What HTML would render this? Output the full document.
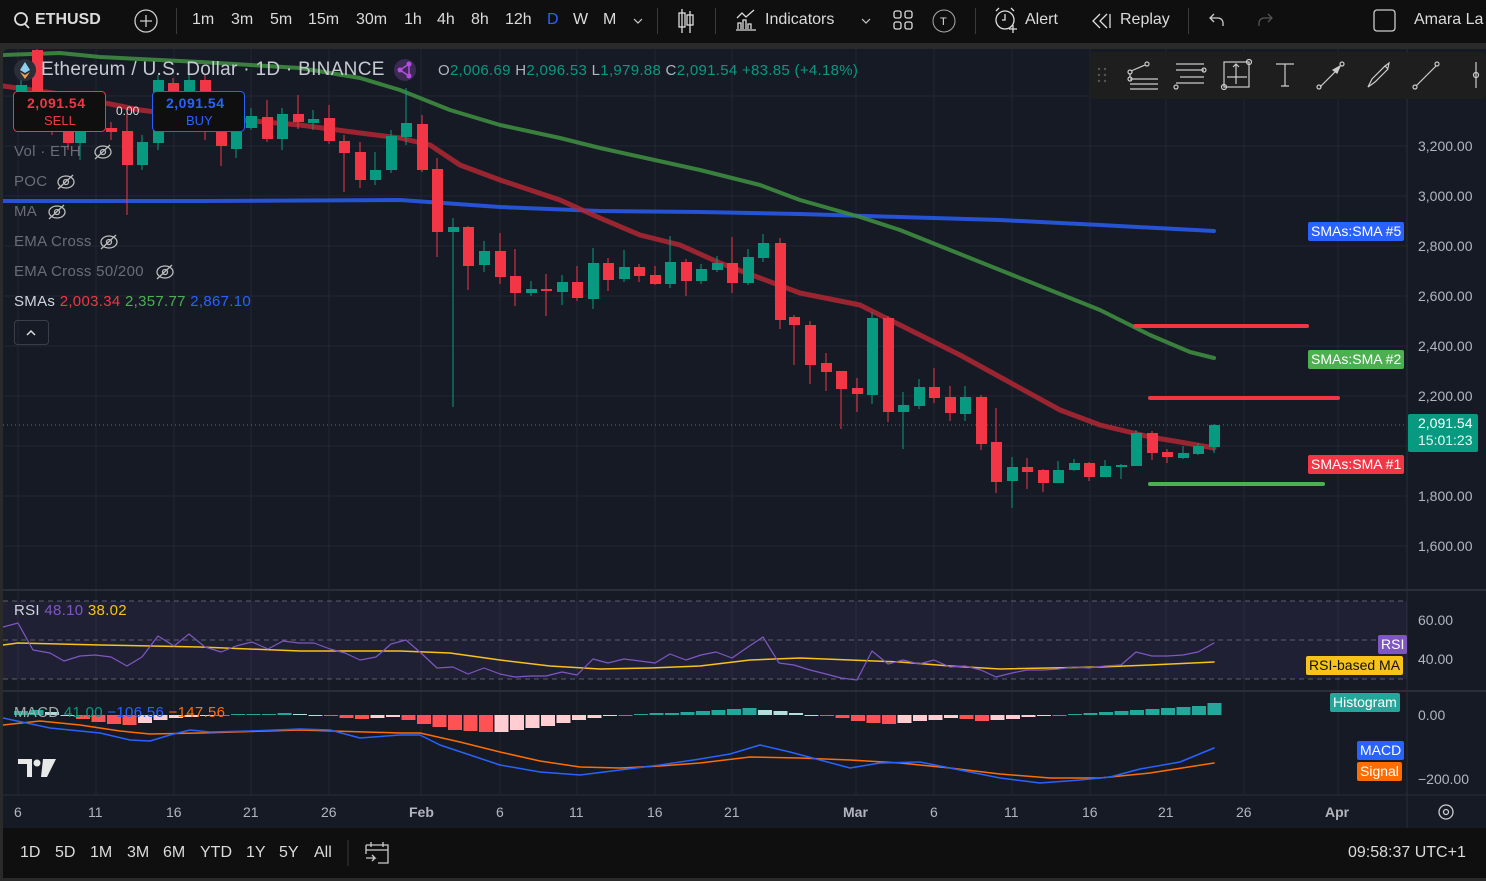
<!DOCTYPE html>
<html><head><meta charset="utf-8"><style>
*{margin:0;padding:0;box-sizing:border-box}
body{width:1486px;height:881px;background:#2a2a2a;font-family:"Liberation Sans",sans-serif;color:#d1d4dc;overflow:hidden;position:relative}
.top{position:absolute;left:0;top:0;width:1486px;height:43px;background:#0f0f0f}
.t{position:absolute;font-size:16px;color:#dbdbdb;white-space:nowrap}
.sep{position:absolute;top:8px;width:1px;height:26px;background:#3a3a3a}
.chart{position:absolute;left:3px;top:49px;width:1483px;height:779px;background:#161a25;border-radius:6px 0 0 0;overflow:hidden}
.bot{position:absolute;left:3px;top:828px;width:1483px;height:50px;background:#0f0f0f}
.lg{position:absolute;font-size:15px;letter-spacing:.3px;color:#6a6d78;white-space:nowrap}
.tag{position:absolute;font-size:13px;color:#fff;padding:0 3px;height:19px;line-height:19px;border-radius:2px;white-space:nowrap}
.ax{position:absolute;font-size:14px;color:#b2b5be;white-space:nowrap}
svg{position:absolute;left:0;top:0}
</style></head><body>
<div class="top">
<svg width="30" height="43"><circle cx="21" cy="19" r="6" fill="none" stroke="#ddd" stroke-width="1.8"/><line x1="25" y1="24" x2="29" y2="28" stroke="#ddd" stroke-width="1.8"/></svg>
<div class="t" style="left:35px;top:11px;font-weight:bold">ETHUSD</div>
<svg width="170" height="43"><circle cx="146" cy="21" r="11" fill="none" stroke="#ccc" stroke-width="1.3"/><path d="M146 15v12M140 21h12" stroke="#ccc" stroke-width="1.3"/></svg>
<div class="sep" style="left:176px"></div>
<div class="t" style="left:192px;top:11px">1m</div><div class="t" style="left:231px;top:11px">3m</div><div class="t" style="left:270px;top:11px">5m</div><div class="t" style="left:308px;top:11px">15m</div><div class="t" style="left:356px;top:11px">30m</div><div class="t" style="left:404px;top:11px">1h</div><div class="t" style="left:437px;top:11px">4h</div><div class="t" style="left:471px;top:11px">8h</div><div class="t" style="left:505px;top:11px">12h</div><div class="t" style="left:547px;top:11px;color:#2962ff">D</div><div class="t" style="left:573px;top:11px">W</div><div class="t" style="left:603px;top:11px">M</div>
<svg width="1486" height="43">
<path d="M634 19l4 4 4-4" fill="none" stroke="#ccc" stroke-width="1.2"/>
<g stroke="#ddd" fill="none" stroke-width="1.3"><path d="M682 9v24M690 11v22"/><rect x="679" y="13" width="6" height="14"/><rect x="687" y="15" width="6" height="10"/></g>
<g stroke="#ddd" fill="none" stroke-width="1.3"><path d="M736 30h20M738 29v-6h3v6M743 29v-9h3v9M748 29v-5h3v5M737 18l5-5 4 4 8-7"/></g>
<path d="M862 19l4 4 4-4" fill="none" stroke="#ccc" stroke-width="1.2"/>
<g fill="none" stroke="#ddd" stroke-width="1.3"><rect x="894" y="11" width="7" height="7" rx="2"/><rect x="905" y="11" width="7" height="7" rx="2"/><rect x="894" y="22" width="7" height="7" rx="2"/><rect x="905" y="22" width="7" height="7" rx="2"/></g>
<circle cx="944" cy="21" r="11" fill="none" stroke="#aaa" stroke-width="1"/><text x="940" y="25" font-size="11" fill="#ddd" font-family="Liberation Sans">T</text>
<g fill="none" stroke="#ddd" stroke-width="1.3"><circle cx="1005" cy="20" r="9"/><path d="M1005 14v6h-3M996 11l3-3M1014 11l-3-3M1009 29h8M1013 25v8"/></g>
<path d="M1100 14l-7 7 7 7M1107 14l-7 7 7 7M1110 14v14" fill="none" stroke="#ddd" stroke-width="1.3"/>
<path d="M1214 14l-4 4 4 4M1210 18h8a5 5 0 0 1 5 5v3" fill="none" stroke="#ccc" stroke-width="1.3"/>
<path d="M1268 14l4 4-4 4M1272 18h-8a5 5 0 0 0-5 5v3" fill="none" stroke="#555" stroke-width="1.3"/>
<rect x="1374" y="10" width="21" height="21" rx="3" fill="none" stroke="#ccc" stroke-width="1.3"/>
</svg>
<div class="sep" style="left:657px"></div><div class="sep" style="left:715px"></div><div class="sep" style="left:975px"></div><div class="sep" style="left:1188px"></div>
<div class="t" style="left:765px;top:11px">Indicators</div>
<div class="t" style="left:1025px;top:11px">Alert</div>
<div class="t" style="left:1120px;top:11px">Replay</div>
<div class="t" style="left:1414px;top:11px">Amara La</div>
</div>

<div class="chart">
<svg id="c" width="1483" height="779"></svg>
</div>

<div class="bot"></div>

<svg width="1486" height="881" id="o">
<circle cx="25" cy="70" r="11" fill="#2a2e39"/><path d="M25 62l-5 8 5 3 5-3z" fill="#8fd0f0"/><path d="M25 75l-5-3 5 7 5-7z" fill="#f0a050"/>
<circle cx="405" cy="70" r="11" fill="#3c2a55"/><g fill="#b14ee0"><circle cx="400" cy="70" r="2.5"/><circle cx="409" cy="64" r="2.5"/><circle cx="409" cy="76" r="2.5"/></g><path d="M400 70l9-6M400 70l9 6M409 64v12" stroke="#b14ee0" stroke-width="1.5"/>
<rect x="13.5" y="91.5" width="92" height="40" rx="4" fill="#0f0f0f" stroke="#f23645"/>
<rect x="152.5" y="91.5" width="92" height="40" rx="4" fill="#0f0f0f" stroke="#2962ff"/>
<rect x="14.5" y="320.5" width="34" height="24" rx="3" fill="none" stroke="#3a3e49"/><path d="M27 335l4-4 4 4" stroke="#ddd" fill="none" stroke-width="1.5"/>
<rect x="1090" y="52" width="396" height="47" rx="4" fill="#1e1e1f"/>
<g fill="#555"><circle cx="1099" cy="69" r="1.2"/><circle cx="1105" cy="69" r="1.2"/><circle cx="1099" cy="75" r="1.2"/><circle cx="1105" cy="75" r="1.2"/><circle cx="1099" cy="81" r="1.2"/><circle cx="1105" cy="81" r="1.2"/></g>
<g fill="none" stroke="#ccc" stroke-width="1.2">
<path d="M1130 79h28M1130 84h28M1130 89h28"/><circle cx="1130" cy="72" r="2"/><circle cx="1130" cy="79" r="2"/><circle cx="1147" cy="64" r="2"/><path d="M1131 71l14-6M1130 74v3"/>
<path d="M1176 64h28M1176 70h28M1180 77h24M1176 83h28"/><circle cx="1204" cy="70" r="2"/><circle cx="1176" cy="87" r="2"/>
<rect x="1224" y="62" width="25" height="25"/><path d="M1236 64v20M1227 77h20M1233 67l3-3 3 3"/><circle cx="1249" cy="62" r="2.5"/><circle cx="1224" cy="87" r="2.5"/>
<path d="M1276 64h18M1285 64v22M1281 86h8"/>
<path d="M1320 87l20-20"/><circle cx="1319" cy="87" r="2"/><circle cx="1342" cy="64" r="2"/><path d="M1333 70l7-4-3 7z" fill="#ccc"/>
<path d="M1368 87l4-8 13-13 3 3-13 13z M1385 66l4-3-1 5"/>
<path d="M1416 86l20-20"/><circle cx="1415" cy="87" r="2"/><circle cx="1437" cy="64" r="2"/>
<path d="M1476 62v26"/><circle cx="1476" cy="75" r="2.5"/>
</g>
<g stroke="#bbb" stroke-width="1.3" fill="none">
<ellipse cx="103" cy="152" rx="8" ry="6"/><circle cx="103" cy="152" r="2.5"/><path d="M95 159l15-14"/>
<ellipse cx="66" cy="182" rx="8" ry="6"/><circle cx="66" cy="182" r="2.5"/><path d="M58 189l15-14"/>
<ellipse cx="57" cy="212" rx="8" ry="6"/><circle cx="57" cy="212" r="2.5"/><path d="M49 219l15-14"/>
<ellipse cx="109" cy="242" rx="8" ry="6"/><circle cx="109" cy="242" r="2.5"/><path d="M101 249l15-14"/>
<ellipse cx="165" cy="272" rx="8" ry="6"/><circle cx="165" cy="272" r="2.5"/><path d="M157 279l15-14"/>
</g>
<g fill="#e8e8e8"><path d="M18 759h14v18h-5v-13h-9z"/><circle cx="37" cy="763" r="3.5"/><path d="M43 759h13l-9 18h-6z"/></g>
<g fill="none" stroke="#ccc" stroke-width="1.3"><circle cx="1446" cy="812" r="7"/><circle cx="1446" cy="812" r="2.5"/>
<path d="M366 845h22v18h-10M366 845v9M366 850h22M371 842v5M383 842v5M366 858h9l-3-3M375 858l-3 3"/></g>
<line x1="348" y1="840" x2="348" y2="866" stroke="#3a3a3a"/>
</svg>

<div class="t" style="left:41px;top:59px;font-size:19px;letter-spacing:.3px;color:#c8cad2">Ethereum / U.S. Dollar · 1D · BINANCE</div>
<div class="t" style="left:438px;top:62px;font-size:15px;letter-spacing:.3px;color:#b2b5be">O<span style="color:#089981">2,006.69</span> H<span style="color:#089981">2,096.53</span> L<span style="color:#089981">1,979.88</span> C<span style="color:#089981">2,091.54 +83.85 (+4.18%)</span></div>
<div class="t" style="left:27px;top:95px;font-size:14px;color:#f23645;font-weight:bold;letter-spacing:.5px">2,091.54</div>
<div class="t" style="left:44px;top:113px;font-size:13px;color:#f23645">SELL</div>
<div class="t" style="left:116px;top:104px;font-size:12px;color:#ddd">0.00</div>
<div class="t" style="left:166px;top:95px;font-size:14px;color:#2962ff;font-weight:bold;letter-spacing:.5px">2,091.54</div>
<div class="t" style="left:186px;top:113px;font-size:13px;color:#2962ff">BUY</div>
<div class="lg" style="left:14px;top:143px">Vol · ETH</div>
<div class="lg" style="left:14px;top:173px">POC</div>
<div class="lg" style="left:14px;top:203px">MA</div>
<div class="lg" style="left:14px;top:233px">EMA Cross</div>
<div class="lg" style="left:14px;top:263px">EMA Cross 50/200</div>
<div class="lg" style="left:14px;top:293px;color:#d1d4dc">SMAs <span style="color:#f23645">2,003.34</span> <span style="color:#4caf50">2,357.77</span> <span style="color:#2962ff">2,867.10</span></div>
<div class="lg" style="left:14px;top:602px;color:#d1d4dc">RSI <span style="color:#7e57c2">48.10</span> <span style="color:#f7c21a">38.02</span></div>
<div class="lg" style="left:14px;top:704px;color:#aaa">MACD <span style="color:#089981">41.00</span> <span style="color:#2962ff">−106.56</span> <span style="color:#ff6d00">−147.56</span></div>

<div class="ax" style="left:1418px;top:138px">3,200.00</div>
<div class="ax" style="left:1418px;top:188px">3,000.00</div>
<div class="ax" style="left:1418px;top:238px">2,800.00</div>
<div class="ax" style="left:1418px;top:288px">2,600.00</div>
<div class="ax" style="left:1418px;top:338px">2,400.00</div>
<div class="ax" style="left:1418px;top:388px">2,200.00</div>
<div class="ax" style="left:1418px;top:488px">1,800.00</div>
<div class="ax" style="left:1418px;top:538px">1,600.00</div>
<div class="ax" style="left:1418px;top:612px">60.00</div>
<div class="ax" style="left:1418px;top:651px">40.00</div>
<div class="ax" style="left:1418px;top:707px">0.00</div>
<div class="ax" style="left:1418px;top:771px">−200.00</div>
<div class="tag" style="left:1308px;top:222px;background:#2962ff;font-size:14px">SMAs:SMA #5</div>
<div class="tag" style="left:1308px;top:350px;background:#4caf50;font-size:14px">SMAs:SMA #2</div>
<div class="tag" style="left:1308px;top:455px;background:#f23645;font-size:14px">SMAs:SMA #1</div>
<div class="tag" style="left:1408px;top:414px;height:38px;width:70px;background:#089981;line-height:17px;padding:1px 0 0 10px;font-size:14px">2,091.54<br><span style="color:#dfe">15:01:23</span></div>
<div class="tag" style="left:1378px;top:635px;background:#7e57c2;font-size:14px">RSI</div>
<div class="tag" style="left:1306px;top:656px;background:#f7c21a;color:#111;font-size:14px">RSI-based MA</div>
<div class="tag" style="left:1330px;top:693px;background:#26a69a;font-size:14px">Histogram</div>
<div class="tag" style="left:1357px;top:741px;background:#2962ff;font-size:14px">MACD</div>
<div class="tag" style="left:1357px;top:762px;background:#ff6d00;font-size:14px">Signal</div>

<div class="ax" style="left:14px;top:804px;font-size:14px">6</div><div class="ax" style="left:88px;top:804px;font-size:14px">11</div><div class="ax" style="left:166px;top:804px;font-size:14px">16</div><div class="ax" style="left:243px;top:804px;font-size:14px">21</div><div class="ax" style="left:321px;top:804px;font-size:14px">26</div><div class="ax" style="left:409px;top:804px;font-size:14px;font-weight:bold">Feb</div><div class="ax" style="left:496px;top:804px;font-size:14px">6</div><div class="ax" style="left:569px;top:804px;font-size:14px">11</div><div class="ax" style="left:647px;top:804px;font-size:14px">16</div><div class="ax" style="left:724px;top:804px;font-size:14px">21</div><div class="ax" style="left:843px;top:804px;font-size:14px;font-weight:bold">Mar</div><div class="ax" style="left:930px;top:804px;font-size:14px">6</div><div class="ax" style="left:1004px;top:804px;font-size:14px">11</div><div class="ax" style="left:1082px;top:804px;font-size:14px">16</div><div class="ax" style="left:1158px;top:804px;font-size:14px">21</div><div class="ax" style="left:1236px;top:804px;font-size:14px">26</div><div class="ax" style="left:1325px;top:804px;font-size:14px;font-weight:bold">Apr</div>

<div class="t" style="left:20px;top:844px">1D</div><div class="t" style="left:55px;top:844px">5D</div><div class="t" style="left:90px;top:844px">1M</div><div class="t" style="left:127px;top:844px">3M</div><div class="t" style="left:163px;top:844px">6M</div><div class="t" style="left:200px;top:844px">YTD</div><div class="t" style="left:246px;top:844px">1Y</div><div class="t" style="left:279px;top:844px">5Y</div><div class="t" style="left:314px;top:844px">All</div>
<div class="t" style="left:1348px;top:844px">09:58:37 UTC+1</div>

<script>
(function(){
var s=document.getElementById('c');var ox=3,oy=49,h='';
function P(pts,col,w,op){return '<polyline fill="none" stroke="'+col+'" stroke-width="'+w+'" stroke-linejoin="round" stroke-linecap="round" opacity="'+(op||1)+'" points="'+pts.map(function(p){return (p[0]-ox)+','+(p[1]-oy)}).join(' ')+'"/>';}
var g='';
[96,146,196,246,296,346,396,446,496,546].forEach(function(y){g+='<line x1="0" x2="1404" y1="'+(y-oy)+'" y2="'+(y-oy)+'" stroke="#232733"/>';});
[18,96,174,251,329,421,500,577,655,732,856,934,1012,1090,1166,1244,1338].forEach(function(x){g+='<line y1="0" y2="746" x1="'+(x-ox)+'" x2="'+(x-ox)+'" stroke="#232733"/>';});
h+=g;
h+='<rect x="1404" y="0" width="79" height="779" fill="#161a25"/>';
h+='<line x1="0" x2="1483" y1="'+(590-oy)+'" y2="'+(590-oy)+'" stroke="#2a2e39" stroke-width="2"/>';
h+='<line x1="0" x2="1483" y1="'+(691-oy)+'" y2="'+(691-oy)+'" stroke="#2a2e39" stroke-width="2"/>';
h+='<line x1="0" x2="1483" y1="'+(795-oy)+'" y2="'+(795-oy)+'" stroke="#2a2e39"/>';
h+='<line x1="1404" x2="1404" y1="0" y2="779" stroke="#2a2e39"/>';
h+='<rect x="0" y="'+(601-oy)+'" width="1404" height="78" fill="#7e57c2" opacity="0.1"/>';
[601,640,679].forEach(function(y){h+='<line x1="0" x2="1404" y1="'+(y-oy)+'" y2="'+(y-oy)+'" stroke="#787b86" stroke-dasharray="5,4" opacity="0.7"/>';});
h+='<line x1="0" x2="1404" y1="'+(425-oy)+'" y2="'+(425-oy)+'" stroke="#089981" stroke-dasharray="1,3"/>';
h+=P([[3,201],[200,201],[400,200],[500,207],[600,211],[700,212],[800,214],[900,217],[1000,220],[1100,225],[1214,231]],'#2962ff',4,0.8);
h+=P([[3,55],[60,53],[100,57],[200,62],[300,68],[360,78],[400,90],[450,110],[500,125],[560,138],[600,148],[700,170],[760,185],[800,200],[860,217],[900,230],[950,250],[1000,270],[1050,290],[1100,310],[1150,335],[1190,352],[1214,358]],'#3d8c40',4,0.9);
h+=P([[3,86],[60,94],[100,102],[140,110],[180,115],[240,120],[300,125],[360,133],[400,138],[430,145],[460,165],[500,180],[560,200],[600,218],[640,235],[680,245],[720,263],[760,278],[800,293],[860,305],[900,325],[960,355],[1000,377],[1060,410],[1100,425],[1150,437],[1180,442],[1214,448]],'#b22833',5,0.85);
h+='<g stroke-width="4" stroke-linecap="round"><line x1="'+(1135-ox)+'" x2="'+(1307-ox)+'" y1="'+(326-oy)+'" y2="'+(326-oy)+'" stroke="#f23645"/><line x1="'+(1150-ox)+'" x2="'+(1338-ox)+'" y1="'+(398-oy)+'" y2="'+(398-oy)+'" stroke="#f23645"/><line x1="'+(1150-ox)+'" x2="'+(1323-ox)+'" y1="'+(484-oy)+'" y2="'+(484-oy)+'" stroke="#4caf50"/></g>';
var C=[[21,95,85,80,100],[37,50,100,45,105],[52,100,128,95,135],[68,132,143,125,150],[80,143,132,128,160],[111,128,132,122,140],[127,131,165,113,215],[142,165,142,135,170],[158,143,80,75,150],[173,83,100,78,110],[189,100,80,75,106],[205,80,130,75,140],[221,132,146,125,166],[236,149,132,125,158],[251,128,116,108,130],[267,117,139,100,142],[282,139,114,108,150],[298,114,122,95,129],[313,123,119,110,130],[329,118,141,105,144],[344,141,153,135,192],[360,152,180,142,188],[375,180,170,152,185],[391,170,136,130,173],[406,137,123,88,145],[422,124,170,115,172],[437,169,232,158,257],[453,232,227,218,407],[468,227,266,226,290],[484,265,251,241,272],[500,251,277,233,284],[515,276,293,249,306],[531,293,289,281,296],[546,289,291,274,316],[562,292,282,275,305],[577,282,298,266,301],[593,299,263,248,309],[608,263,280,258,291],[624,279,267,250,282],[639,267,276,264,282],[655,275,284,266,285],[670,284,262,236,288],[686,262,281,259,296],[701,281,269,264,284],[717,270,263,256,272],[732,263,283,237,293],[748,283,257,249,285],[763,258,243,234,262],[780,243,320,238,329],[794,317,325,315,365],[810,325,365,321,384],[826,363,372,353,391],[841,371,389,371,429],[857,388,394,378,412],[872,395,318,312,404],[888,318,412,316,422],[903,412,405,392,449],[919,406,387,379,409],[934,387,398,368,403],[950,397,413,386,421],[965,414,397,386,421],[981,397,444,395,450],[996,442,482,408,493],[1012,481,467,457,508],[1027,467,472,458,489],[1043,470,483,469,492],[1058,483,470,461,483],[1074,470,463,459,471],[1089,463,477,462,481],[1105,477,466,460,477],[1121,467,465,464,479],[1136,466,433,430,466],[1152,433,453,431,460],[1167,452,457,449,463],[1183,458,453,446,459],[1198,454,446,443,455],[1214,447,425,424,453]];
C.forEach(function(c){var up=c[2]<c[1];var col=up?'#089981':'#f23645';var t=Math.min(c[1],c[2]),b=Math.max(c[1],c[2]);if(b-t<2)b=t+2;
h+='<line x1="'+(c[0]-ox)+'" x2="'+(c[0]-ox)+'" y1="'+(c[3]-oy)+'" y2="'+(c[4]-oy)+'" stroke="'+col+'"/>';
h+='<rect x="'+(c[0]-ox-5)+'" y="'+(t-oy)+'" width="11" height="'+(b-t)+'" fill="'+col+'"/>';});
h+=P([[3,645],[18,643],[100,645],[200,647],[300,651],[400,651],[450,653],[500,660],[550,666],[600,669],[650,668],[700,666],[750,660],[800,658],[850,660],[900,662],[950,666],[1000,669],[1100,667],[1150,665],[1214,662]],'#f7c21a',1.5);
h+=P([[3,627],[18,623],[33,650],[50,653],[64,661],[80,656],[95,655],[111,657],[127,666],[142,657],[158,636],[174,646],[189,634],[205,647],[221,652],[236,646],[252,642],[268,649],[283,641],[299,643],[314,643],[330,649],[345,653],[360,660],[376,657],[391,644],[406,640],[421,653],[437,668],[453,667],[468,674],[484,668],[500,674],[515,677],[531,676],[546,676],[562,672],[577,675],[593,659],[608,663],[624,659],[640,661],[655,663],[670,654],[686,660],[701,655],[716,652],[732,658],[748,647],[763,637],[779,663],[794,665],[810,670],[826,674],[841,678],[857,680],[872,651],[888,664],[903,660],[919,664],[934,660],[950,667],[965,666],[981,670],[996,677],[1012,673],[1027,670],[1043,670],[1058,669],[1074,667],[1089,668],[1105,666],[1121,665],[1136,652],[1152,656],[1167,656],[1183,655],[1198,652],[1214,643]],'#7e57c2',1.2);
var H=[4,5,3,0,-4,-7,-9,-10,-8,-5,-3,-2,-1,0,1,1,1,2,1,0,-1,-3,-4,-3,-2,-5,-9,-12,-15,-16,-17,-17,-15,-13,-11,-8,-5,-3,-1,0,1,2,2,3,4,5,6,7,5,4,2,0,-1,-3,-6,-8,-9,-8,-6,-5,-3,-4,-6,-5,-4,-2,-1,0,1,2,3,4,5,6,7,8,9,12];
var z=715;
H.forEach(function(v,i){var x=21+15.5*i;var p=i?H[i-1]:0;var col=v>=0?(v>=p?'#26a69a':'#b2dfdb'):(v<p?'#ff5252':'#ffcdd2');
var y=v>0?z-v:z;h+='<rect x="'+(x-ox-7)+'" y="'+(y-oy)+'" width="14" height="'+Math.max(Math.abs(v),1)+'" fill="'+col+'"/>';});
h+=P([[3,725],[40,721],[80,725],[120,731],[150,734],[200,733],[300,730],[400,733],[420,733],[460,742],[500,752],[540,761],[580,767],[620,768],[660,766],[700,763],[750,757],[800,758],[850,760],[900,763],[950,768],[1000,774],[1050,778],[1100,778],[1150,773],[1214,763]],'#ff6d00',1.5);
h+=P([[3,718],[50,728],[100,733],[130,740],[150,741],[170,735],[190,730],[210,732],[250,731],[300,729],[330,730],[360,738],[400,735],[420,735],[440,745],[470,755],[500,765],[540,772],[580,775],[620,770],[660,765],[700,759],[730,754],[760,745],[790,752],[820,760],[850,768],[880,763],[920,762],[960,770],[1000,778],[1040,783],[1080,780],[1110,777],[1140,769],[1180,762],[1214,748]],'#2962ff',1.5);
s.innerHTML=h;
})();
</script>
</body></html>
